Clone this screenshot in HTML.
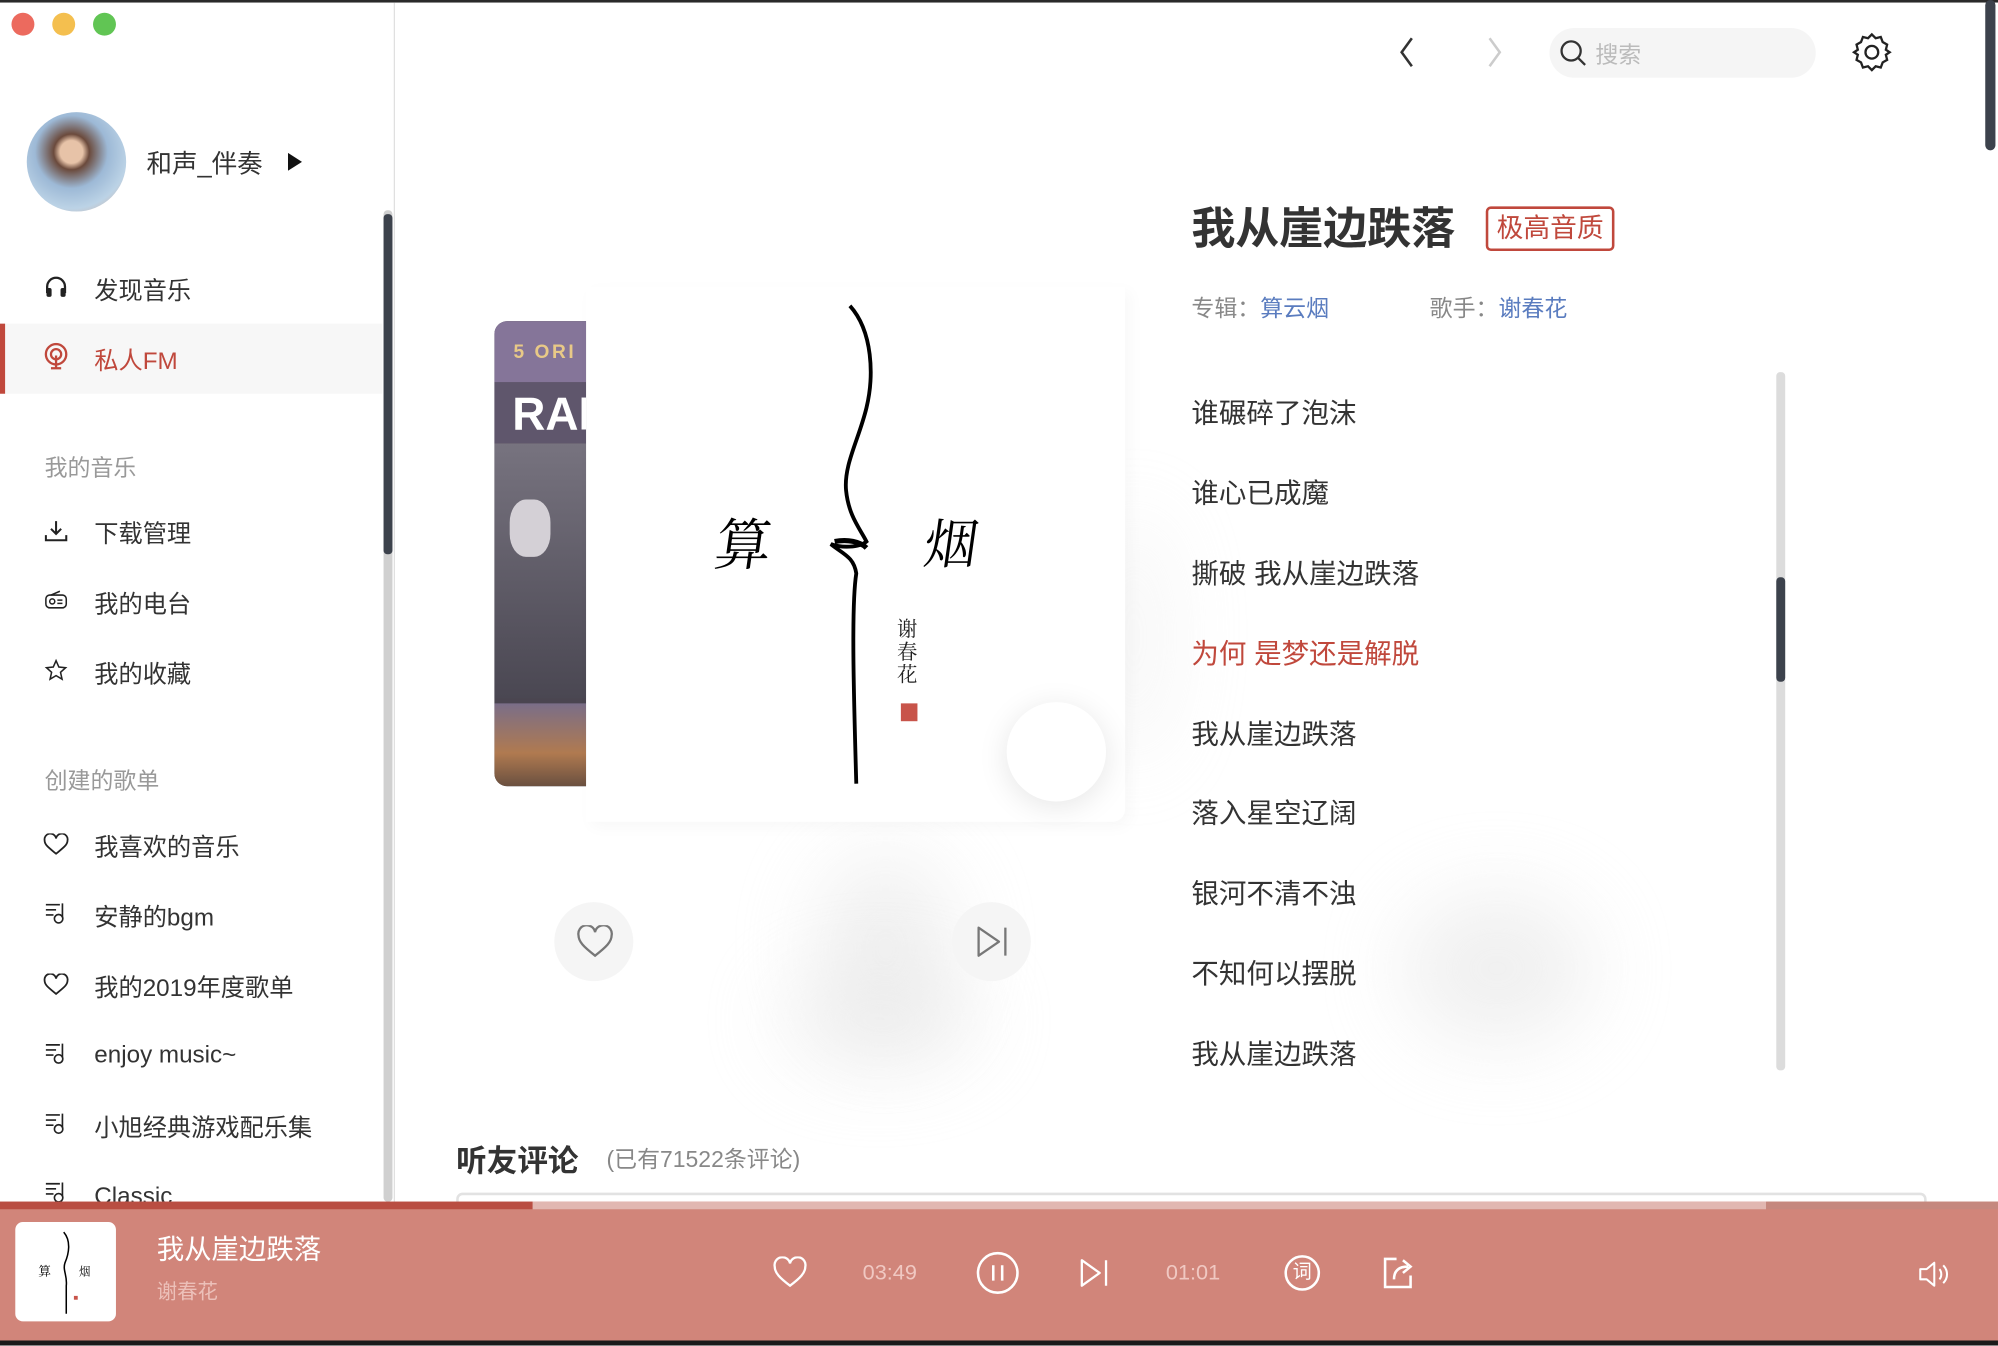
<!DOCTYPE html>
<html><head><meta charset="utf-8">
<style>
html,body{margin:0;padding:0;width:1998px;height:1346px;overflow:hidden;background:#fff}
#s{position:absolute;left:0;top:0;width:1568px;height:1056px;transform:scale(1.27423);transform-origin:0 0;font-family:"Liberation Sans","Noto Sans CJK SC",sans-serif;color:#333;overflow:hidden;background:#fff}
.a{position:absolute;white-space:nowrap}
.t{position:absolute;white-space:nowrap;transform:translateY(-50%)}
.nav{font-size:19px;color:#333}
.ic{position:absolute}
.ly{font-size:21.6px;color:#333}
.blob{position:absolute;border-radius:50%;filter:blur(30px);background:#e4e4e4}
</style></head><body><div id="s">
<div class="a" style="left:0;top:0;width:1568px;height:2px;background:#2a2a2a"></div>
<div class="a" style="left:9px;top:10px;width:18px;height:18px;border-radius:50%;background:#ec6a5e"></div>
<div class="a" style="left:41px;top:10px;width:18px;height:18px;border-radius:50%;background:#f4bf4f"></div>
<div class="a" style="left:73px;top:10px;width:18px;height:18px;border-radius:50%;background:#61c554"></div>
<div class="a" style="left:309px;top:2px;width:1px;height:941px;background:#e0e0e0"></div>
<div class="a" style="left:301px;top:165px;width:7px;height:778px;background:#d0d0d0;border-radius:3px"></div>
<div class="a" style="left:301px;top:168px;width:7px;height:267px;background:#3c424c;border-radius:3px"></div>
<div class="a" style="left:21px;top:88px;width:78px;height:78px;border-radius:50%;background:radial-gradient(circle at 45% 40%,#e7c3a8 0 14%,#6b4a3c 22%,#9db9d6 45%,#bcd3e6 70%,#d8a78e 100%)"></div>
<div class="t" style="left:115px;top:127px;font-size:20px;color:#333">和声_伴奏</div>
<svg class="ic" style="left:226px;top:120px" width="11" height="14"><path d="M0 0L11 7L0 14Z" fill="#111"/></svg>
<svg class="ic" style="left:35px;top:216px" width="18" height="18" viewBox="0 0 18 18"><path d="M2 14V9a7 7 0 0 1 14 0v5" fill="none" stroke="#222" stroke-width="1.8"/><rect x="1.5" y="10" width="4" height="7" rx="1.5" fill="#222"/><rect x="12.5" y="10" width="4" height="7" rx="1.5" fill="#222"/></svg>
<div class="t nav" style="left:74px;top:227px">发现音乐</div>
<div class="a" style="left:0;top:254px;width:300px;height:55px;background:#f7f7f7"></div>
<div class="a" style="left:0;top:254px;width:4px;height:55px;background:#c0483c"></div>
<svg class="ic" style="left:34px;top:269px" width="20" height="22" viewBox="0 0 20 22"><circle cx="10" cy="9" r="8" fill="none" stroke="#c0483c" stroke-width="1.8"/><circle cx="10" cy="9" r="4" fill="none" stroke="#c0483c" stroke-width="1.8"/><path d="M10 10V20M6 20H14" stroke="#c0483c" stroke-width="1.8"/></svg>
<div class="t nav" style="left:74px;top:282px;color:#c0483c">私人FM</div>
<div class="t" style="left:35px;top:366px;font-size:18px;color:#999">我的音乐</div>
<svg class="ic" style="left:35px;top:408px" width="18" height="18" viewBox="0 0 18 18"><path d="M9 1V11M5 7L9 11L13 7M1 12V16H17V12" fill="none" stroke="#222" stroke-width="1.6"/></svg>
<div class="t nav" style="left:74px;top:418px">下载管理</div>
<svg class="ic" style="left:35px;top:463px" width="18" height="16" viewBox="0 0 18 16"><rect x="1" y="4" width="16" height="10" rx="3" fill="none" stroke="#222" stroke-width="1.2"/><circle cx="6" cy="9" r="2" fill="none" stroke="#222" stroke-width="1.2"/><path d="M10 8H14M10 10.5H14M5 4L12 1" stroke="#222" stroke-width="1.2"/></svg>
<div class="t nav" style="left:74px;top:473px">我的电台</div>
<svg class="ic" style="left:35px;top:517px" width="18" height="18" viewBox="0 0 18 18"><path d="M9 1.5L11.2 6.5L16.5 7L12.5 10.6L13.7 16L9 13.2L4.3 16L5.5 10.6L1.5 7L6.8 6.5Z" fill="none" stroke="#222" stroke-width="1.2"/></svg>
<div class="t nav" style="left:74px;top:528px">我的收藏</div>
<div class="t" style="left:35px;top:612px;font-size:18px;color:#999">创建的歌单</div>
<svg class="ic" style="left:34px;top:654px" width="20" height="18" viewBox="0 0 20 18"><path d="M10 16C4 11 1 9 1 5.5A4.3 4.3 0 0 1 10 4A4.3 4.3 0 0 1 19 5.5C19 9 16 11 10 16Z" fill="none" stroke="#222" stroke-width="1.4"/></svg>
<div class="t nav" style="left:74px;top:664px">我喜欢的音乐</div>
<svg class="ic" style="left:35px;top:708px" width="18" height="18" viewBox="0 0 18 18"><path d="M1 2H12M1 6H9M1 10H7M14 1V12" stroke="#222" stroke-width="1.3" fill="none"/><circle cx="11" cy="13" r="3.3" fill="none" stroke="#222" stroke-width="1.3"/></svg>
<div class="t nav" style="left:74px;top:719px">安静的bgm</div>
<svg class="ic" style="left:34px;top:764px" width="20" height="18" viewBox="0 0 20 18"><path d="M10 16C4 11 1 9 1 5.5A4.3 4.3 0 0 1 10 4A4.3 4.3 0 0 1 19 5.5C19 9 16 11 10 16Z" fill="none" stroke="#222" stroke-width="1.4"/></svg>
<div class="t nav" style="left:74px;top:774px">我的2019年度歌单</div>
<svg class="ic" style="left:35px;top:818px" width="18" height="18" viewBox="0 0 18 18"><path d="M1 2H12M1 6H9M1 10H7M14 1V12" stroke="#222" stroke-width="1.3" fill="none"/><circle cx="11" cy="13" r="3.3" fill="none" stroke="#222" stroke-width="1.3"/></svg>
<div class="t nav" style="left:74px;top:829px">enjoy music~</div>
<svg class="ic" style="left:35px;top:873px" width="18" height="18" viewBox="0 0 18 18"><path d="M1 2H12M1 6H9M1 10H7M14 1V12" stroke="#222" stroke-width="1.3" fill="none"/><circle cx="11" cy="13" r="3.3" fill="none" stroke="#222" stroke-width="1.3"/></svg>
<div class="t nav" style="left:74px;top:884px">小旭经典游戏配乐集</div>
<svg class="ic" style="left:35px;top:927px" width="18" height="18" viewBox="0 0 18 18"><path d="M1 2H12M1 6H9M1 10H7M14 1V12" stroke="#222" stroke-width="1.3" fill="none"/><circle cx="11" cy="13" r="3.3" fill="none" stroke="#222" stroke-width="1.3"/></svg>
<div class="t nav" style="left:74px;top:940px">Classic</div>
<svg class="ic" style="left:1096px;top:28px" width="16" height="26"><path d="M12 2L4 13L12 24" fill="none" stroke="#333" stroke-width="2"/></svg>
<svg class="ic" style="left:1165px;top:28px" width="16" height="26"><path d="M4 2L12 13L4 24" fill="none" stroke="#ccc" stroke-width="2"/></svg>
<div class="a" style="left:1216px;top:22px;width:209px;height:39px;border-radius:20px;background:#f5f5f5"></div>
<svg class="ic" style="left:1223px;top:30px" width="24" height="24"><circle cx="10" cy="10" r="7.5" fill="none" stroke="#333" stroke-width="1.8"/><path d="M15.5 15.5L21 21" stroke="#333" stroke-width="1.8"/></svg>
<div class="t" style="left:1252px;top:42px;font-size:18px;color:#bbb">搜索</div>
<svg class="ic" style="left:1453px;top:25px" width="32" height="32" viewBox="0 0 32 32"><path d="M16 2L19 5L23 4L24.5 8L28 10L27 14L30 16L27 18L28 22L24.5 24L23 28L19 27L16 30L13 27L9 28L7.5 24L4 22L5 18L2 16L5 14L4 10L7.5 8L9 4L13 5Z" fill="none" stroke="#222" stroke-width="1.8"/><circle cx="16" cy="16" r="5" fill="none" stroke="#222" stroke-width="1.8"/></svg>
<div class="a" style="left:1558px;top:0;width:8px;height:118px;background:#3c424c;border-radius:4px"></div>
<div class="blob" style="left:640px;top:670px;width:110px;height:150px;opacity:.55"></div>
<div class="blob" style="left:610px;top:760px;width:160px;height:80px;opacity:.45"></div>
<div class="blob" style="left:1100px;top:700px;width:150px;height:120px;opacity:.55"></div>
<div class="blob" style="left:860px;top:400px;width:60px;height:200px;opacity:.3"></div>
<div class="a" style="left:388px;top:252px;width:72px;height:365px;border-radius:10px 0 0 10px;background:#4a4550;overflow:hidden">
 <div class="a" style="left:0;top:0;width:72px;height:48px;background:#857599"></div>
 <div class="a" style="left:15px;top:16px;font:bold 15px 'Liberation Sans';color:#e8c987;letter-spacing:2px">5 ORI</div>
 <div class="a" style="left:0;top:48px;width:72px;height:48px;background:#5f566c"></div>
 <div class="a" style="left:14px;top:52px;font:bold 36px 'Liberation Sans';color:#fff">RAI</div>
 <div class="a" style="left:0;top:96px;width:72px;height:200px;background:linear-gradient(#77737f,#4a4752)"></div>
 <div class="a" style="left:12px;top:140px;width:32px;height:45px;border-radius:40%;background:#d4d0d6"></div>
 <div class="a" style="left:0;top:300px;width:72px;height:65px;background:linear-gradient(#7a6e88,#b07a50 60%,#6a5040)"></div>
</div>
<div class="a" style="left:460px;top:225px;width:423px;height:420px;background:#fff;border-radius:0 0 10px 0;box-shadow:4px 4px 12px rgba(0,0,0,.03)"></div>
<svg class="ic" style="left:460px;top:225px" width="420" height="420">
<path d="M207 15C225 35 226 70 220 95C214 120 202 140 204 160C206 180 215 190 220 200C214 205 200 205 192 202C202 210 210 212 212 225C208 250 210 320 212 390" fill="none" stroke="#000" stroke-width="3"/>
<path d="M195 200C205 198 215 200 220 205" fill="none" stroke="#000" stroke-width="4"/>
<rect x="247" y="327" width="13" height="14" fill="#c8544a"/>
</svg>
<div class="a" style="left:562px;top:392px;font:44px 'Noto Serif CJK SC',serif;color:#000;transform:skewX(-8deg)">算</div>
<div class="a" style="left:726px;top:395px;font:42px 'Noto Serif CJK SC',serif;color:#000;transform:skewX(-8deg)">烟</div>
<div class="a" style="left:704px;top:484px;font:16px 'Noto Serif CJK SC',serif;color:#222;line-height:18px;width:20px;white-space:normal">谢春花</div>
<div class="a" style="left:790px;top:551px;width:78px;height:78px;border-radius:50%;background:#fff;box-shadow:0 4px 24px rgba(0,0,0,.1)"></div>
<div class="a" style="left:435px;top:708px;width:62px;height:62px;border-radius:50%;background:#f5f5f5"></div>
<svg class="ic" style="left:452px;top:726px" width="30" height="27" viewBox="0 0 30 27"><path d="M15 24C6 17 2 13 2 8A6.3 6.3 0 0 1 15 5.5A6.3 6.3 0 0 1 28 8C28 13 24 17 15 24Z" fill="none" stroke="#777" stroke-width="1.8"/></svg>
<div class="a" style="left:747px;top:708px;width:62px;height:62px;border-radius:50%;background:#f5f5f5"></div>
<svg class="ic" style="left:765px;top:725px" width="28" height="28"><path d="M3 3L19 14L3 25Z" fill="none" stroke="#777" stroke-width="1.8" stroke-linejoin="round"/><path d="M24 3V25" stroke="#777" stroke-width="1.8"/></svg>
<div class="t" style="left:935px;top:176px;font-size:34.5px;font-weight:bold;color:#333">我从崖边跌落</div>
<div class="a" style="left:1166px;top:162px;width:97px;height:31px;border:2px solid #c0483c;border-radius:4px;color:#c0483c;font-size:21px;text-align:center;line-height:31px">极高音质</div>
<div class="t" style="left:935px;top:241px;font-size:18px;color:#888">专辑：<span style="color:#5a7cbf">算云烟</span></div>
<div class="t" style="left:1122px;top:241px;font-size:18px;color:#888">歌手：<span style="color:#5a7cbf">谢春花</span></div>
<div class="a" style="left:1394px;top:292px;width:7px;height:548px;background:#dcdcdc;border-radius:3px"></div>
<div class="a" style="left:1394px;top:453px;width:7px;height:82px;background:#3c424c;border-radius:3px"></div>
<div class="t ly" style="left:935px;top:323px">谁碾碎了泡沫</div>
<div class="t ly" style="left:935px;top:386px">谁心已成魔</div>
<div class="t ly" style="left:935px;top:449px">撕破 我从崖边跌落</div>
<div class="t ly" style="left:935px;top:512px;color:#c0483c">为何 是梦还是解脱</div>
<div class="t ly" style="left:935px;top:575px">我从崖边跌落</div>
<div class="t ly" style="left:935px;top:637px">落入星空辽阔</div>
<div class="t ly" style="left:935px;top:700px">银河不清不浊</div>
<div class="t ly" style="left:935px;top:763px">不知何以摆脱</div>
<div class="t ly" style="left:935px;top:826px">我从崖边跌落</div>
<div class="t" style="left:358px;top:909px;font-size:24px;font-weight:bold;color:#333">听友评论</div>
<div class="t" style="left:476px;top:909px;font-size:18px;color:#888">(已有71522条评论)</div>
<div class="a" style="left:358px;top:936px;width:1150px;height:20px;border:2px solid #e2e2e2;border-radius:5px"></div>
<div class="a" style="left:0;top:943px;width:1568px;height:110px;background:#d1857a"></div>
<div class="a" style="left:0;top:943px;width:418px;height:6px;background:#b94e42"></div>
<div class="a" style="left:418px;top:943px;width:968px;height:6px;background:#e1b7b1"></div>
<div class="a" style="left:1386px;top:943px;width:182px;height:6px;background:#c5887e"></div>
<div class="a" style="left:0;top:1052px;width:1568px;height:4px;background:#1a1a1a"></div>
<div class="a" style="left:12px;top:959px;width:79px;height:78px;background:#fff;border-radius:6px"></div>
<svg class="ic" style="left:12px;top:959px" width="79" height="78"><path d="M38 8C44 15 42 25 39 32C37 38 41 42 40 50V72" fill="none" stroke="#000" stroke-width="1.2"/><text x="18" y="42" font-size="10" font-family="Noto Serif CJK SC">算</text><text x="50" y="42" font-size="9" font-family="Noto Serif CJK SC">烟</text><rect x="46" y="58" width="3" height="3" fill="#c8544a"/></svg>
<div class="t" style="left:123px;top:979px;font-size:21.5px;color:#fff">我从崖边跌落</div>
<div class="t" style="left:123px;top:1012px;font-size:16px;color:#ecc0b9">谢春花</div>
<svg class="ic" style="left:606px;top:986px" width="28" height="26" viewBox="0 0 28 26"><path d="M14 23C6 17 2 13 2 8A6 6 0 0 1 14 5.5A6 6 0 0 1 26 8C26 13 22 17 14 23Z" fill="none" stroke="#fff" stroke-width="1.8"/></svg>
<div class="t" style="left:677px;top:999px;font-size:17px;color:#f0c8c2">03:49</div>
<svg class="ic" style="left:766px;top:982px" width="34" height="34"><circle cx="17" cy="17" r="15.5" fill="none" stroke="#fff" stroke-width="2"/><path d="M13.5 11V23M20.5 11V23" stroke="#fff" stroke-width="2"/></svg>
<svg class="ic" style="left:846px;top:986px" width="26" height="26"><path d="M3 3L17 13L3 23Z" fill="none" stroke="#fff" stroke-width="1.8" stroke-linejoin="round"/><path d="M22 3V23" stroke="#fff" stroke-width="1.8"/></svg>
<div class="t" style="left:915px;top:999px;font-size:17px;color:#f0c8c2">01:01</div>
<div class="a" style="left:1008px;top:985px;width:24px;height:24px;border:2px solid #fff;border-radius:50%;color:#fff;font-size:15px;text-align:center;line-height:24px">词</div>
<svg class="ic" style="left:1083px;top:984px" width="30" height="30"><path d="M13 4H4V26H24V17" fill="none" stroke="#fff" stroke-width="2"/><path d="M11 20C11 13 15 10 22 10M18 5L24 10L18 15" fill="none" stroke="#fff" stroke-width="2"/></svg>
<svg class="ic" style="left:1505px;top:988px" width="26" height="24"><path d="M2 8H7L13 3V21L7 16H2Z" fill="none" stroke="#fff" stroke-width="1.6" stroke-linejoin="round"/><path d="M17 8C19 10 19 14 17 16M20 5C24 9 24 15 20 19" fill="none" stroke="#fff" stroke-width="1.6"/></svg>
</div></body></html>
